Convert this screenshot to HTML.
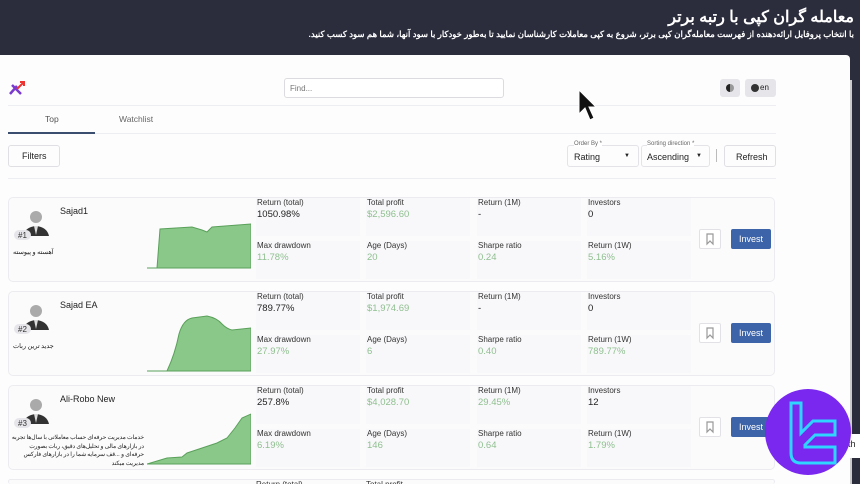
<!DOCTYPE html>
<html style="width:860px;height:484px;overflow:hidden"><head><meta charset="utf-8"><style>
*{margin:0;padding:0;box-sizing:border-box}
body{width:860px;height:484px;overflow:hidden;background:#2b2d3d;font-family:"Liberation Sans",sans-serif;position:relative;color:#222}
.hdr{position:absolute;right:6px;text-align:right;color:#fff;font-family:"Liberation Sans","Noto Sans CJK SC",sans-serif;direction:rtl;font-weight:bold}
.page{position:absolute;left:0;top:55px;width:850px;height:429px;background:#fdfdfe;border-top-right-radius:4px}
.a{position:absolute}
.card{position:absolute;left:8px;width:767px;height:85px;border:1px solid #ececf0;border-radius:5px;background:#fbfbfc}
.lbl{font-size:8px;color:#333}
.val{font-size:9.5px;color:#222;margin-top:2px}
.g{color:#8fbf8f}
.m{position:absolute;width:104px;background:#f8f8fa;height:38px;padding-left:1px}
.btn{position:absolute;background:#3d64a8;color:#fff;font-size:9px;text-align:center;border-radius:2px}
.bm{position:absolute;width:22px;height:20px;border:1px solid #e2e2e6;border-radius:2px;background:#fff}
</style></head><body>
<div class="hdr" style="top:7px;font-size:16px">معامله گران کپی با رتبه برتر</div>
<div class="hdr" style="top:29px;font-size:8.5px">با انتخاب پروفایل ارائه‌دهنده از فهرست معامله‌گران کپی برتر، شروع به کپی معاملات کارشناسان نمایید تا به‌طور خودکار با سود آنها، شما هم سود کسب کنید.</div>
<div class="page"></div>
<div class="a" style="left:850px;top:80px;width:2px;height:404px;background:#ccc"></div>
<svg class="a" style="left:8px;top:80px" width="18" height="16"><path d="M2 14 L9 6 M4 5 L13 14" stroke="#7a3ad0" stroke-width="2.5"/><path d="M9 9 L16 2 M12 2 H16 V6" stroke="#e33" stroke-width="2" fill="none"/></svg>
<div class="a" style="left:284px;top:78px;width:220px;height:20px;border:1px solid #dcdce0;border-radius:3px;background:#fff;font-size:8px;color:#777;padding:5px 5px">Find...</div>
<div class="a" style="left:720px;top:79px;width:20px;height:18px;background:#e6e6ea;border-radius:3px"><div class="a" style="left:6px;top:5px;width:8px;height:8px;border-radius:50%;background:linear-gradient(90deg,#222 50%,#999 50%)"></div></div>
<div class="a" style="left:745px;top:79px;width:31px;height:18px;background:#e6e6ea;border-radius:3px;font-size:8px;padding:4px 0 0 15px">en<div class="a" style="left:6px;top:5px;width:8px;height:8px;border-radius:50%;background:#333"></div></div>
<div class="a" style="left:8px;top:105px;width:768px;height:1px;background:#eceef2"></div>
<div class="a" style="left:45px;top:114px;font-size:8.5px;color:#555">Top</div>
<div class="a" style="left:119px;top:114px;font-size:8.5px;color:#666">Watchlist</div>
<div class="a" style="left:8px;top:133px;width:768px;height:1px;background:#eceef2"></div>
<div class="a" style="left:8px;top:132px;width:87px;height:2px;background:#3c4e70"></div>
<div class="a" style="left:8px;top:145px;width:52px;height:22px;border:1px solid #e0e0e4;border-radius:3px;font-size:9px;padding:5px 0 0 13px">Filters</div>
<div class="a" style="left:567px;top:145px;width:72px;height:22px;border:1px solid #e4e4e8;border-radius:3px;font-size:9px;padding:6px 0 0 6px">Rating<span style="position:absolute;left:56px;font-size:6px;top:7px">▼</span><span style="position:absolute;left:6px;top:-5px;font-size:6px;color:#666;background:#fff">Order By *</span></div>
<div class="a" style="left:641px;top:145px;width:69px;height:22px;border:1px solid #e4e4e8;border-radius:3px;font-size:9px;padding:6px 0 0 5px">Ascending<span style="position:absolute;left:54px;font-size:6px;top:7px">▼</span><span style="position:absolute;left:5px;top:-5px;font-size:6px;color:#666;background:#fff">Sorting direction *</span></div>
<div class="a" style="left:716px;top:149px;width:1px;height:13px;background:#bbb"></div>
<div class="a" style="left:724px;top:145px;width:52px;height:22px;border:1px solid #e0e0e4;border-radius:3px;font-size:9px;padding:6px 0 0 11px">Refresh</div>
<div class="a" style="left:8px;top:178px;width:768px;height:1px;background:#eceef2"></div>

<div class="card" style="top:197px"></div>
<div class="card" style="top:291px"></div>
<div class="card" style="top:385px"></div>
<div class="card" style="top:479px;height:5px;border-bottom:none"></div>

<svg class="a" style="left:14px;top:208px" width="36" height="40"><circle cx="22" cy="9" r="6" fill="#aaa"/><path d="M9 28 Q11 19 22 18 Q33 19 35 28 Z" fill="#333"/><path d="M20 18 L22 27 L24 18Z" fill="#ddd"/><rect x="0" y="22" width="17" height="10" rx="5" fill="#e6e6ea"/><text x="4" y="30" font-size="8" fill="#333" font-family="Liberation Sans">#1</text></svg>
<svg class="a" style="left:14px;top:302px" width="36" height="40"><circle cx="22" cy="9" r="6" fill="#aaa"/><path d="M9 28 Q11 19 22 18 Q33 19 35 28 Z" fill="#333"/><path d="M20 18 L22 27 L24 18Z" fill="#ddd"/><rect x="0" y="22" width="17" height="10" rx="5" fill="#e6e6ea"/><text x="4" y="30" font-size="8" fill="#333" font-family="Liberation Sans">#2</text></svg>
<svg class="a" style="left:14px;top:396px" width="36" height="40"><circle cx="22" cy="9" r="6" fill="#aaa"/><path d="M9 28 Q11 19 22 18 Q33 19 35 28 Z" fill="#333"/><path d="M20 18 L22 27 L24 18Z" fill="#ddd"/><rect x="0" y="22" width="17" height="10" rx="5" fill="#e6e6ea"/><text x="4" y="30" font-size="8" fill="#333" font-family="Liberation Sans">#3</text></svg>
<div class="a" style="left:60px;top:206px;font-size:9px">Sajad1</div>
<div class="a" style="left:60px;top:300px;font-size:9px">Sajad EA</div>
<div class="a" style="left:60px;top:394px;font-size:9px">Ali-Robo New</div>
<div class="a" style="left:13px;top:246px;font-size:6.5px;font-family:'Noto Sans CJK SC',sans-serif">آهسته و پیوسته</div>
<div class="a" style="left:13px;top:340px;font-size:6.5px;font-family:'Noto Sans CJK SC',sans-serif">جدید ترین ربات</div>
<div class="a" style="left:11px;top:433px;width:133px;height:34px;overflow:hidden;font-size:5.8px;line-height:8.5px;direction:rtl;text-align:right;font-family:'Noto Sans CJK SC',sans-serif">خدمات مدیریت حرفه‌ای حساب معاملاتی با سال‌ها تجربه در بازارهای مالی و تحلیل‌های دقیق، ربات بصورت حرفه‌ای و ...قف سرمایه شما را در بازارهای فارکس مدیریت میکند</div>

<svg class="a" style="left:147px;top:200px" width="104" height="80"><path d="M0 68 L10 68 L13 29 L45 27 L55 30 L60 32 L65 27 L104 24 L104 68Z" fill="#8ac88a" stroke="#5aa05a" stroke-width="1"/></svg>
<svg class="a" style="left:147px;top:294px" width="104" height="80"><path d="M0 77 L20 77 Q28 60 32 40 Q36 26 45 24 L60 22 Q70 24 75 30 Q80 35 85 36 L104 34 L104 77Z" fill="#8ac88a" stroke="#5aa05a" stroke-width="1"/></svg>
<svg class="a" style="left:147px;top:388px" width="104" height="80"><path d="M0 76 L20 70 L35 69 L40 65 L55 60 L70 55 L80 50 L88 40 L95 30 L104 26 L104 76Z" fill="#8ac88a" stroke="#5aa05a" stroke-width="1"/></svg>

<div class="m" style="left:256px;top:198px"><div class="lbl">Return (total)</div><div class="val">1050.98%</div></div>
<div class="m" style="left:366px;top:198px"><div class="lbl">Total profit</div><div class="val g">$2,596.60</div></div>
<div class="m" style="left:477px;top:198px"><div class="lbl">Return (1M)</div><div class="val">-</div></div>
<div class="m" style="left:587px;top:198px"><div class="lbl">Investors</div><div class="val">0</div></div>
<div class="m" style="left:256px;top:241px"><div class="lbl">Max drawdown</div><div class="val g">11.78%</div></div>
<div class="m" style="left:366px;top:241px"><div class="lbl">Age (Days)</div><div class="val g">20</div></div>
<div class="m" style="left:477px;top:241px"><div class="lbl">Sharpe ratio</div><div class="val g">0.24</div></div>
<div class="m" style="left:587px;top:241px"><div class="lbl">Return (1W)</div><div class="val g">5.16%</div></div>

<div class="m" style="left:256px;top:292px"><div class="lbl">Return (total)</div><div class="val">789.77%</div></div>
<div class="m" style="left:366px;top:292px"><div class="lbl">Total profit</div><div class="val g">$1,974.69</div></div>
<div class="m" style="left:477px;top:292px"><div class="lbl">Return (1M)</div><div class="val">-</div></div>
<div class="m" style="left:587px;top:292px"><div class="lbl">Investors</div><div class="val">0</div></div>
<div class="m" style="left:256px;top:335px"><div class="lbl">Max drawdown</div><div class="val g">27.97%</div></div>
<div class="m" style="left:366px;top:335px"><div class="lbl">Age (Days)</div><div class="val g">6</div></div>
<div class="m" style="left:477px;top:335px"><div class="lbl">Sharpe ratio</div><div class="val g">0.40</div></div>
<div class="m" style="left:587px;top:335px"><div class="lbl">Return (1W)</div><div class="val g">789.77%</div></div>

<div class="m" style="left:256px;top:386px"><div class="lbl">Return (total)</div><div class="val">257.8%</div></div>
<div class="m" style="left:366px;top:386px"><div class="lbl">Total profit</div><div class="val g">$4,028.70</div></div>
<div class="m" style="left:477px;top:386px"><div class="lbl">Return (1M)</div><div class="val g">29.45%</div></div>
<div class="m" style="left:587px;top:386px"><div class="lbl">Investors</div><div class="val">12</div></div>
<div class="m" style="left:256px;top:429px"><div class="lbl">Max drawdown</div><div class="val g">6.19%</div></div>
<div class="m" style="left:366px;top:429px"><div class="lbl">Age (Days)</div><div class="val g">146</div></div>
<div class="m" style="left:477px;top:429px"><div class="lbl">Sharpe ratio</div><div class="val g">0.64</div></div>
<div class="m" style="left:587px;top:429px"><div class="lbl">Return (1W)</div><div class="val g">1.79%</div></div>

<div class="a" style="left:256px;top:480px;font-size:8px;color:#333;height:4px;overflow:hidden">Return (total)</div>
<div class="a" style="left:366px;top:480px;font-size:8px;color:#333;height:4px;overflow:hidden">Total profit</div>

<div class="bm" style="left:699px;top:229px"><svg width="20" height="18"><path d="M7 4 V14 L10 11 L13 14 V4Z" fill="none" stroke="#999" stroke-width="1.2"/></svg></div>
<div class="bm" style="left:699px;top:323px"><svg width="20" height="18"><path d="M7 4 V14 L10 11 L13 14 V4Z" fill="none" stroke="#999" stroke-width="1.2"/></svg></div>
<div class="bm" style="left:699px;top:417px"><svg width="20" height="18"><path d="M7 4 V14 L10 11 L13 14 V4Z" fill="none" stroke="#999" stroke-width="1.2"/></svg></div>
<div class="btn" style="left:731px;top:229px;width:40px;height:20px;line-height:20px">Invest</div>
<div class="btn" style="left:731px;top:323px;width:40px;height:20px;line-height:20px">Invest</div>
<div class="btn" style="left:731px;top:417px;width:40px;height:20px;line-height:20px">Invest</div>

<svg class="a" style="left:577px;top:88px" width="22" height="40"><path d="M2 2 L2 26 L8 20 L13 32 L17 30 L12 19 L19 19Z" fill="#111" stroke="#fff" stroke-width="1"/></svg>

<div class="a" style="left:846px;top:434px;width:14px;height:24px;background:#fff"></div>
<div class="a" style="left:846px;top:439px;font-size:9px">ith</div>
<div class="a" style="left:765px;top:389px;width:86px;height:86px;border-radius:50%;background:#7a27f0"></div>
<svg class="a" style="left:765px;top:389px" width="86" height="86"><path d="M26 14 H36 V44 L48 32 H70 V46 H50 L40 56 V58 H70 V74 H36 Q26 74 26 64Z" fill="none" stroke="#2fd4ff" stroke-width="3"/></svg>
</body></html>
